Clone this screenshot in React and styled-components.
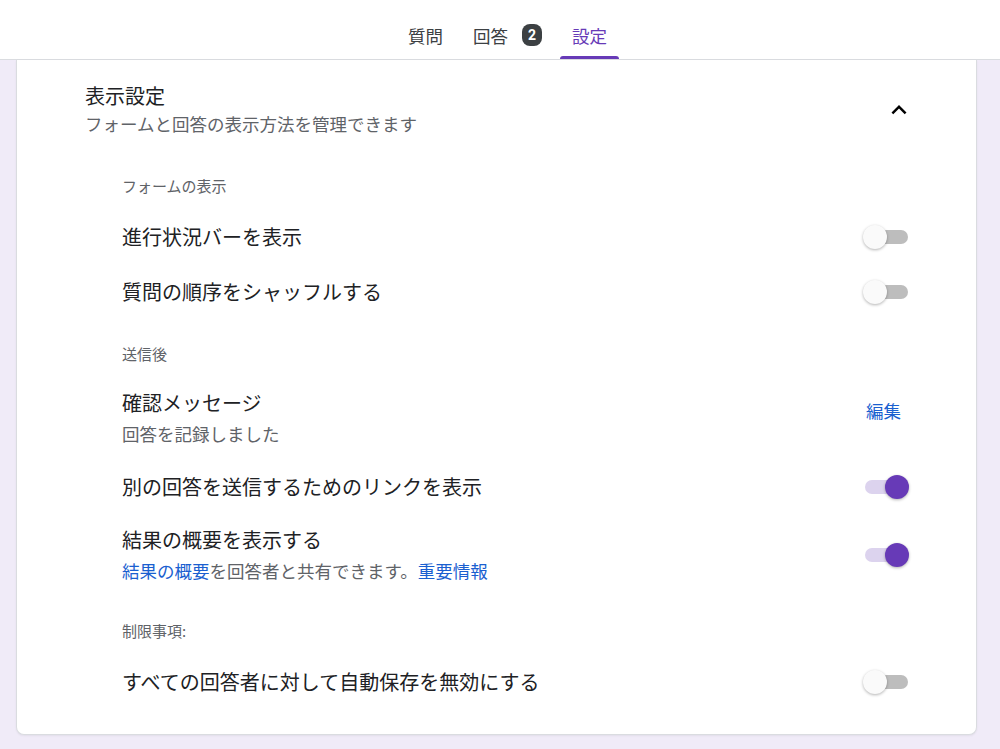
import React, { useState } from "react";
import styled, { createGlobalStyle } from "styled-components";

const GlobalStyle = createGlobalStyle`
    html, body {
        margin: 0;
        padding: 0;
        background: #f0ebf8;
        height: 749px;
        overflow: hidden;
    }
    body {
        font-family: "Noto Sans CJK JP", "Noto Sans", sans-serif;
        color: #202124;
    }
`;

const TopBar = styled.header`
    height: 59px;
    background: #fff;
    border-bottom: 1px solid #dadce0;
    display: flex;
    justify-content: center;
    gap: 6px;
    padding-left: 15px;
`;

const Tab = styled.div`
    position: relative;
    height: 59px;
    padding: 11px 12px 0;
    box-sizing: border-box;
    display: flex;
    align-items: center;
    gap: 14px;
    font-size: 17.5px;
    color: ${(props) => (props.active ? "#673ab7" : "#3c4043")};
    &::after {
        content: "";
        display: ${(props) => (props.active ? "block" : "none")};
        position: absolute;
        left: 0;
        right: 0;
        bottom: 0;
        height: 3px;
        border-radius: 3px 3px 0 0;
        background: #673ab7;
    }
`;

const Badge = styled.span`
    width: 20px;
    height: 22px;
    border-radius: 8px;
    background: #3c4043;
    color: #fff;
    font-family: "Roboto", "Liberation Sans", sans-serif;
    font-weight: 700;
    font-size: 14px;
    display: flex;
    align-items: center;
    justify-content: center;
`;

const Page = styled.main`
    padding: 0 23px 16px 16px;
`;

const Card = styled.section`
    background: #fff;
    border: 1px solid #dadce0;
    border-top: none;
    border-radius: 0 0 8px 8px;
    box-shadow: 0 1px 2px rgba(60, 64, 67, 0.08);
    padding: 22px 67px 25px 68px;
`;

const CardHead = styled.div`
    display: flex;
    justify-content: space-between;
    align-items: center;
`;

const Title = styled.div`
    font-size: 20px;
    line-height: 28px;
    color: #202124;
`;

const Subtitle = styled.div`
    font-size: 17.5px;
    line-height: 28px;
    color: #5f6368;
`;

const IconButton = styled.button`
    border: none;
    background: none;
    padding: 0;
    margin-right: -5px;
    width: 30px;
    height: 30px;
    display: flex;
    color: #000;
    svg {
        width: 30px;
        height: 30px;
    }
`;

const Body = styled.div`
    padding: 14px 0 0 37px;
`;

const SectionLabel = styled.div`
    font-size: 15px;
    line-height: 20px;
    color: #5f6368;
    margin: ${(props) => (props.first ? "24px" : "25px")} 0 13px;
`;

const Row = styled.div`
    min-height: 55px;
    box-sizing: border-box;
    padding: ${(props) => (props.tall ? "12px 0" : "0")};
    display: flex;
    align-items: center;
    justify-content: space-between;
    gap: 24px;
`;

const RowText = styled.div`
    display: flex;
    flex-direction: column;
`;

const RowTitle = styled.div`
    font-size: 20px;
    line-height: 28px;
    color: #202124;
`;

const RowSub = styled.div`
    font-size: 17.5px;
    line-height: 26px;
    margin-top: 4px;
    color: #5f6368;
`;

const Link = styled.a`
    color: #1a5fd0;
    text-decoration: none;
    cursor: pointer;
`;

const EditButton = styled.button`
    border: none;
    background: none;
    padding: 0 8px;
    margin-bottom: 15px;
    font-family: inherit;
    font-size: 17.5px;
    line-height: 28px;
    color: #1a5fd0;
    cursor: pointer;
`;

const Switch = styled.button`
    position: relative;
    flex-shrink: 0;
    width: 46px;
    height: 24px;
    border: none;
    background: none;
    padding: 0;
    cursor: pointer;
`;

const Track = styled.span`
    position: absolute;
    left: 2px;
    right: 1px;
    top: 5px;
    height: 14px;
    border-radius: 7px;
    background: ${(props) => (props.on ? "#dcd3ee" : "#bdbdbd")};
`;

const Thumb = styled.span`
    position: absolute;
    top: 0;
    left: ${(props) => (props.on ? "22px" : "0")};
    width: 24px;
    height: 24px;
    border-radius: 50%;
    background: ${(props) => (props.on ? "#673ab7" : "#fafafa")};
    box-shadow: 0 1px 3px rgba(0, 0, 0, 0.3);
`;

function Toggle({ initial }) {
    const [on, setOn] = useState(initial);
    return (
        <Switch onClick={() => setOn(!on)}>
            <Track on={on} />
            <Thumb on={on} />
        </Switch>
    );
}

export default function App() {
    return (
        <>
            <GlobalStyle />
            <TopBar>
                <Tab>質問</Tab>
                <Tab>
                    回答 <Badge>2</Badge>
                </Tab>
                <Tab active>設定</Tab>
            </TopBar>
            <Page>
                <Card>
                    <CardHead>
                        <div>
                            <Title>表示設定</Title>
                            <Subtitle>フォームと回答の表示方法を管理できます</Subtitle>
                        </div>
                        <IconButton>
                            <svg viewBox="0 0 24 24">
                                <path
                                    fill="currentColor"
                                    d="M12 8l-6 6 1.41 1.41L12 10.83l4.59 4.58L18 14z"
                                />
                            </svg>
                        </IconButton>
                    </CardHead>
                    <Body>
                        <SectionLabel first>フォームの表示</SectionLabel>
                        <Row>
                            <RowTitle>進行状況バーを表示</RowTitle>
                            <Toggle initial={false} />
                        </Row>
                        <Row>
                            <RowTitle>質問の順序をシャッフルする</RowTitle>
                            <Toggle initial={false} />
                        </Row>

                        <SectionLabel>送信後</SectionLabel>
                        <Row tall>
                            <RowText>
                                <RowTitle>確認メッセージ</RowTitle>
                                <RowSub>回答を記録しました</RowSub>
                            </RowText>
                            <EditButton>編集</EditButton>
                        </Row>
                        <Row>
                            <RowTitle>別の回答を送信するためのリンクを表示</RowTitle>
                            <Toggle initial={true} />
                        </Row>
                        <Row tall>
                            <RowText>
                                <RowTitle>結果の概要を表示する</RowTitle>
                                <RowSub>
                                    <Link>結果の概要</Link>を回答者と共有できます。
                                    <Link>重要情報</Link>
                                </RowSub>
                            </RowText>
                            <Toggle initial={true} />
                        </Row>

                        <SectionLabel>制限事項:</SectionLabel>
                        <Row>
                            <RowTitle>すべての回答者に対して自動保存を無効にする</RowTitle>
                            <Toggle initial={false} />
                        </Row>
                    </Body>
                </Card>
            </Page>
        </>
    );
}
